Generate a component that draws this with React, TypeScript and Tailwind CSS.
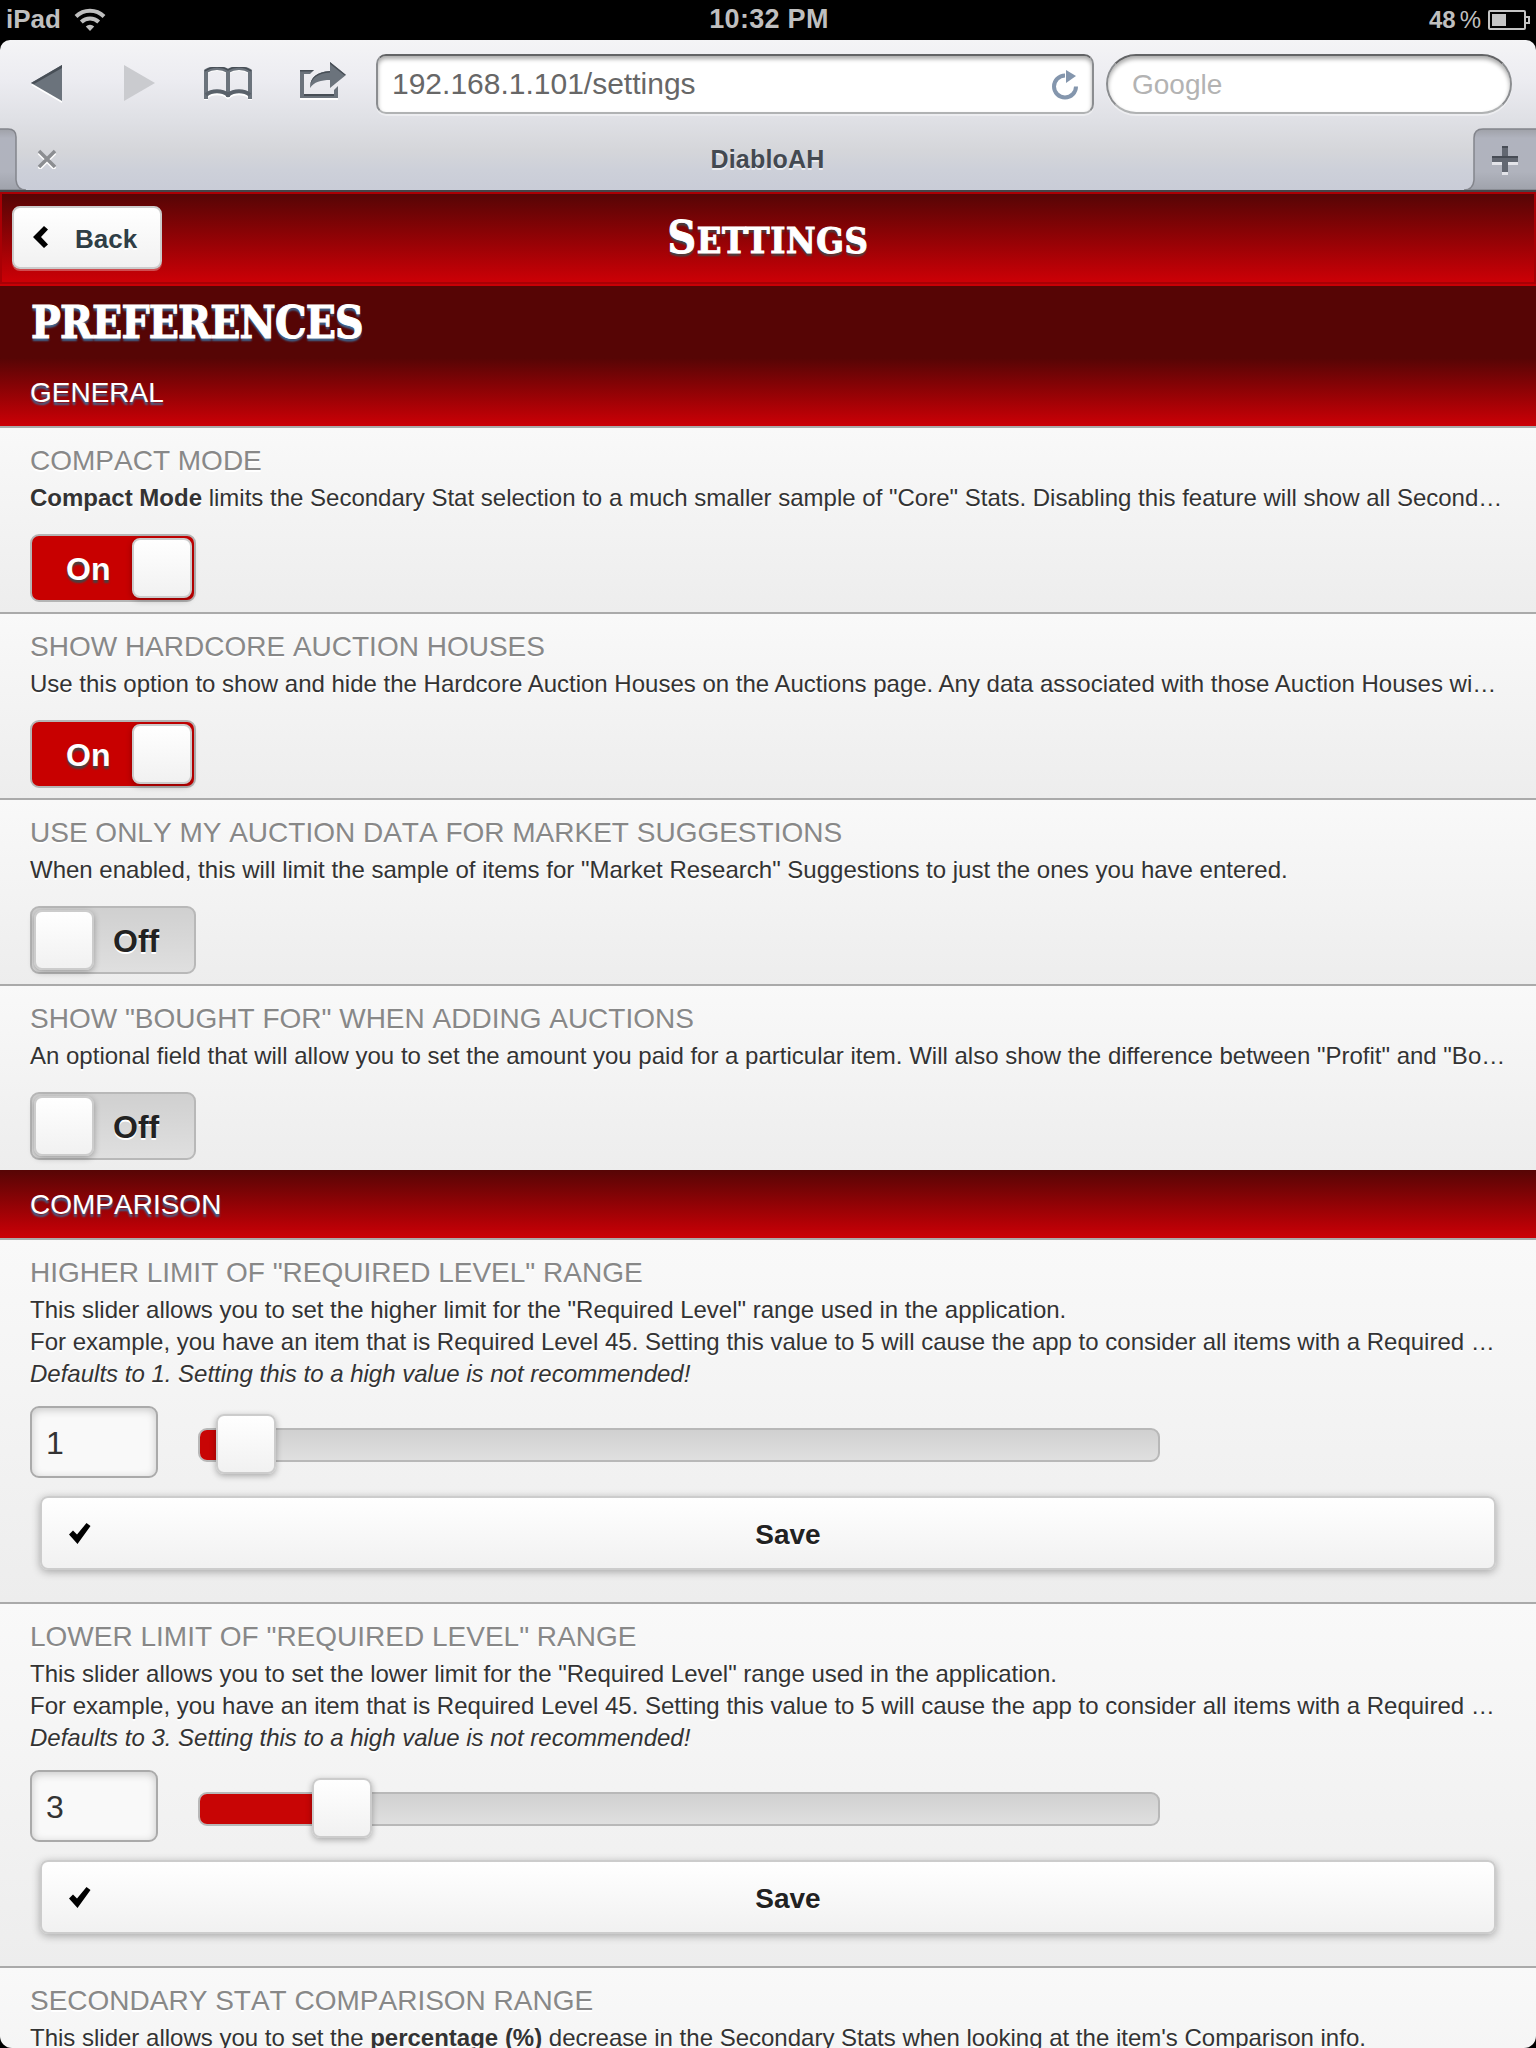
import type { ReactNode } from "react";

function StatusBar() {
  return (
    <div className="relative flex h-10 items-center justify-between bg-black pl-[6px] pr-[6px] text-[#bfbfbf]">
      <div className="flex items-center">
        <span className="relative -top-px w-[68px] text-[26px] font-bold leading-10">iPad</span>
        <svg width="32" height="24" viewBox="0 0 32 24" className="relative top-[-1px]">
          <g fill="none" stroke="#bfbfbf" strokeWidth="4">
            <path d="M2 9.5a20 20 0 0 1 28 0" />
            <path d="M7.3 15a12.5 12.5 0 0 1 17.4 0" />
          </g>
          <path d="M16 24l-4.2-4.6a6 6 0 0 1 8.4 0z" fill="#bfbfbf" />
        </svg>
      </div>
      <span className="absolute inset-x-0 -top-px pl-[2px] text-center text-[27px] font-bold leading-10 tracking-[0.3px] [font-kerning:none]">10:32 PM</span>
      <div className="flex items-center">
        <span className="text-[24px] font-bold leading-10">48</span>
        <span className="ml-[4px] mr-[7px] text-[24px] leading-10">%</span>
        <svg width="42" height="20" viewBox="0 0 42 20">
          <rect x="1" y="1" width="36" height="18" rx="1" fill="none" stroke="#c4c4c4" strokeWidth="2" />
          <path d="M38 7h3v6h-3" fill="none" stroke="#c4c4c4" strokeWidth="2" />
          <rect x="4" y="4" width="14" height="12" fill="#c4c4c4" />
        </svg>
      </div>
    </div>
  );
}

function BrowserBar() {
  return (
    <div className="h-[152px] bg-black">
      <div className="flex h-[152px] flex-col rounded-t-[10px] border-b-2 border-[#454549] bg-[linear-gradient(#f4f4f6_0px,#ececf1_40px,#dfe0e5_80px,#d5d6da_110px,#cdd0d9_130px,#c9ccd7_150px)]">
        <div className="flex h-[88px] items-center pl-[31px]">
          <svg width="31" height="38" viewBox="0 0 31 38">
            <path d="M0 20l31-18v36z" fill="#fff" />
            <path d="M0 18L31 0v36z" fill="#6b737c" />
            <path d="M0 18L31 0v3L3 19z" fill="#474e56" />
          </svg>
          <svg width="31" height="38" viewBox="0 0 31 38" className="ml-[62px]">
            <path d="M31 18L0 0v36z" fill="#cacbcf" />
          </svg>
          <svg width="48" height="34" viewBox="0 0 48 34" className="ml-[49px]">
            <g fill="none" strokeWidth="4">
              <path d="M2 33V5C8 1 18 1 24 5C30 1 40 1 46 5V33M24 6V31M2 30C8 25 18 25 24 30C30 25 40 25 46 30" stroke="#fff" />
              <path d="M2 32V4C8 0 18 0 24 4C30 0 40 0 46 4V32M24 4V30" stroke="#6b737c" />
              <path d="M2 28C8 23 18 23 24 28C30 23 40 23 46 28" stroke="#59616a" />
            </g>
            <path d="M1 4C8-1 18-1 24 3C30-1 40-1 47 4" fill="none" stroke="#474e56" strokeWidth="1.5" />
          </svg>
          <svg width="46" height="38" viewBox="0 0 46 38" className="relative -top-[3px] ml-12">
            <path d="M0 36h38v2H0z" fill="#fff" />
            <path d="M0 8h14l-4 4H4v20h30v-4l4-4v12H0z" fill="#6b737c" />
            <path d="M0 8h14l-2 1.5H0zM4 32h30v2H4z" fill="#474e56" />
            <path d="M30 0l16 13-16 13v-8c-9 0-16 2-20 8 0-11 7-16 20-17z" fill="#6b737c" />
            <path d="M30 0l16 13h-2L30 2zM10 24c1-9 7-14 20-15v1.500c-12 1-18 5-20 13.500z" fill="#474e56" />
          </svg>
          <div className="ml-[30px] flex h-[60px] w-[718px] items-center justify-between rounded-[10px] border-2 border-b-[#b0b2b3] border-t-[#636466] border-x-[#8b8d90] bg-white pl-[14px] pr-[13px] shadow-[inset_0_3px_4px_#00000055,0_2px_0_#ffffff66]">
            <span className="relative -top-px text-[30px] text-[#676767] [font-kerning:none]">192.168.1.101/settings</span>
            <svg width="28" height="32" viewBox="0 0 28 32" className="relative top-px">
              <path d="M14 6.500a11 11 0 1 0 11 11" fill="none" stroke="#8496ad" strokeWidth="4" />
              <path d="M15 1l10 6-10 7z" fill="#8496ad" />
            </svg>
          </div>
          <div className="ml-3 flex h-[60px] w-[406px] items-center rounded-full border-2 border-b-[#b0b2b3] border-t-[#636466] border-x-[#8b8d90] bg-white pl-6 shadow-[inset_0_3px_4px_#00000055,0_2px_0_#ffffff66]">
            <span className="relative top-px text-[28px] text-[#b3b3b3]">Google</span>
          </div>
        </div>
        <div className="flex h-[62px] items-center justify-between">
          <div className="flex items-center">
            <svg width="26" height="62" viewBox="0 0 26 62">
              <defs>
                <linearGradient id="tabSide" x1="0" y1="0" x2="0" y2="1">
                  <stop offset="0" stopColor="#9fa1a8" />
                  <stop offset=".15" stopColor="#b0b3be" />
                  <stop offset=".7" stopColor="#b0b3bd" />
                  <stop offset="1" stopColor="#9fa2ab" />
                </linearGradient>
              </defs>
              <path d="M-2 1H8q8 0 8 8V52q1 10 10 10H-2z" fill="url(#tabSide)" stroke="#83858c" strokeWidth="1.500" />
            </svg>
            <svg width="20" height="20" viewBox="0 0 20 20" className="ml-[11px]">
              <path d="M2 4l16 16M18 4L2 20" stroke="#fff" strokeWidth="3.500" />
              <path d="M2 2l16 16M18 2L2 18" stroke="#8b8d91" strokeWidth="3.500" />
            </svg>
          </div>
          <span className="relative left-[14px] top-px text-[25px] font-bold tracking-[0.2px] text-[#434951] [font-kerning:none] [text-shadow:0_2px_0_#ffffffaa]">DiabloAH</span>
          <svg width="86" height="62" viewBox="0 0 86 62">
            <path d="M88 1H33q-9 0-9 9V52q-1 10-10 10H88z" fill="url(#tabSide)" stroke="#83858c" strokeWidth="1.500" />
            <path d="M42 29h10v-10h6v10h10v8H58v10h-6v-10H42z" fill="#e3e4e9" />
            <path d="M42 28h10V18h6v10h10v6H58v10h-6V34H42z" fill="#626771" />
            <path d="M42 28h26v2H42zM52 18h6v2h-6z" fill="#474c55" />
          </svg>
        </div>
      </div>
    </div>
  );
}

function PageHeader() {
  return (
    <div className="h-[94px] border-b-2 border-[#c80006]">
      <div className="relative flex h-[92px] items-center border-2 border-[#a90005] bg-[linear-gradient(#560505,#cc0006)] pl-[10px]">
        <div className="relative -top-px flex h-[63px] w-[150px] items-center rounded-[8px] border-2 border-[#cccccc] bg-[linear-gradient(#fff,#f1f1f1)] pl-[19px] shadow-[0_2px_0_#ffffff4d]">
          <svg width="15" height="22" viewBox="0 0 15 22">
            <path d="M0 11L11 0l4 3.500L8 11l7 7.500L11 22z" fill="#000" />
          </svg>
          <span className="relative top-[2px] ml-[27px] text-[26px] font-bold text-[#2f3e46] [text-shadow:0_2px_0_#fff]">Back</span>
        </div>
        <h1 className="absolute inset-x-0 top-0 text-center font-['DejaVu_Serif_Condensed','DejaVu_Serif',serif] text-[44px] font-bold leading-[88px] tracking-[0.6px] text-white [-webkit-text-stroke:1px_#fff] [font-stretch:condensed] [text-shadow:0_3px_2px_#444]">
          S<span className="text-[36px]">ETTINGS</span>
        </h1>
      </div>
    </div>
  );
}

function SectionBar({ children }: { children: ReactNode }) {
  return (
    <h3 className="h-[68px] bg-[linear-gradient(#560505,#cc0006)] pl-[30px] text-[28px] leading-[70px] text-white [font-kerning:none] [text-shadow:0_3px_2px_#3e6790]">
      {children}
    </h3>
  );
}

function Row({ title, children }: { title: string; children: ReactNode }) {
  return (
    <section className="flow-root border-t-2 border-[#aaaaaa] bg-[linear-gradient(#f9f9f9,#ededed)] px-[30px] pt-[15px]">
      <h4 className="mb-[3px] whitespace-nowrap text-[28px] leading-9 text-[#888888] [font-kerning:none] [text-shadow:0_2px_0_#fff]">{title}</h4>
      {children}
    </section>
  );
}

function Line({ children }: { children: ReactNode }) {
  return <p className="whitespace-nowrap text-[24px] leading-8 text-[#333333] [text-shadow:0_2px_0_#fff]">{children}</p>;
}

function Toggle({ on }: { on: boolean }) {
  if (on) {
    return (
      <div className="mb-[10px] mt-5 flex h-[68px] w-[166px] items-center justify-between rounded-[9px] border-2 border-[#b5b5b5] bg-[#c80000] pl-[34px] pr-[2px]">
        <span className="relative top-px text-[32px] font-bold text-white [text-shadow:0_3px_2px_#444]">On</span>
        <div className="h-[60px] w-[60px] rounded-[8px] border-2 border-[#cccccc] bg-[linear-gradient(#fff,#f1f1f1)] shadow-[0_2px_6px_#0000004d]" />
      </div>
    );
  }
  return (
    <div className="mb-[10px] mt-5 flex h-[68px] w-[166px] items-center rounded-[9px] border-2 border-[#b8b8b8] bg-[linear-gradient(#d0d0d0,#dfdfdf)] pl-[2px]">
      <div className="h-[60px] w-[60px] rounded-[8px] border-2 border-[#cccccc] bg-[linear-gradient(#fff,#f1f1f1)] shadow-[0_2px_6px_#0000004d]" />
      <span className="relative top-px ml-[19px] text-[32px] font-bold text-[#222222] [text-shadow:0_2px_0_#fff]">Off</span>
    </div>
  );
}

function SliderControl({ value, fill }: { value: string; fill: number }) {
  return (
    <>
      <div className="mt-4 flex h-[72px] items-center">
        <div className="flex h-[72px] w-32 items-center rounded-[9px] border-2 border-[#aaaaaa] bg-[#f9f9f9] pl-[14px] text-[32px] text-[#333333] shadow-[inset_0_2px_8px_#00000033]">
          <span className="relative top-px">{value}</span>
        </div>
        <div className="relative top-[3px] ml-10 flex h-[34px] w-[962px] items-center rounded-[9px] border-2 border-[#b8b8b8] bg-[linear-gradient(#d0d0d0,#dfdfdf)]">
          <div className="h-[30px] shrink-0 rounded-l-[7px] bg-[#c80505]" style={{ width: fill }} />
          <div className="relative -top-px h-[60px] w-[60px] shrink-0 rounded-[8px] border-2 border-[#cccccc] bg-[linear-gradient(#fff,#f1f1f1)] shadow-[0_2px_6px_#0000004d]" />
        </div>
      </div>
      <div className="mx-[10px] mb-8 mt-[18px] flex h-[74px] items-center rounded-[8px] border-2 border-[#cccccc] bg-[linear-gradient(#fff,#f1f1f1)] pl-[26px] shadow-[0_2px_8px_#0000004d]">
        <svg width="24" height="24" viewBox="0 0 24 24" className="relative top-px">
          <path d="M1 12.500l4-4L9 12.500 18.500 1l4 3L9.500 22z" fill="#000" />
        </svg>
        <span className="relative top-[2px] flex-1 pr-[10px] text-center text-[28px] font-bold text-[#222222] [text-shadow:0_2px_0_#fff]">Save</span>
      </div>
    </>
  );
}

export default function App() {
  return (
    <div className="h-[2048px] w-[1536px] overflow-hidden bg-black font-['Liberation_Sans',Arial,sans-serif]">
      <div className="h-[2048px] overflow-hidden rounded-b-[12px]">
        <StatusBar />
        <BrowserBar />
        <PageHeader />
        <h2 className="h-[72px] whitespace-nowrap bg-[#560505] pl-[31px] font-['DejaVu_Serif_Condensed','DejaVu_Serif',serif] text-[44px] font-bold leading-[73px] tracking-[-0.8px] text-white [-webkit-text-stroke:1px_#fff] [font-stretch:condensed] [text-shadow:0_3px_2px_#3e6790]">
          PREFERENCES
        </h2>
        <SectionBar>GENERAL</SectionBar>
        <Row title="COMPACT MODE">
          <Line>
            <b>Compact Mode</b> limits the Secondary Stat selection to a much smaller sample of "Core" Stats. Disabling this feature will show all Second…
          </Line>
          <Toggle on />
        </Row>
        <Row title="SHOW HARDCORE AUCTION HOUSES">
          <Line>
            Use this option to show and hide the Hardcore Auction Houses on the Auctions page. Any data associated with those Auction Houses wi…
          </Line>
          <Toggle on />
        </Row>
        <Row title="USE ONLY MY AUCTION DATA FOR MARKET SUGGESTIONS">
          <Line>
            When enabled, this will limit the sample of items for "Market Research" Suggestions to just the ones you have entered.
          </Line>
          <Toggle on={false} />
        </Row>
        <Row title={'SHOW "BOUGHT FOR" WHEN ADDING AUCTIONS'}>
          <Line>
            An optional field that will allow you to set the amount you paid for a particular item. Will also show the difference between "Profit" and "Bo…
          </Line>
          <Toggle on={false} />
        </Row>
        <SectionBar>COMPARISON</SectionBar>
        <Row title={'HIGHER LIMIT OF "REQUIRED LEVEL" RANGE'}>
          <Line>This slider allows you to set the higher limit for the "Required Level" range used in the application.</Line>
          <Line>
            For example, you have an item that is Required Level 45. Setting this value to 5 will cause the app to consider all items with a Required …
          </Line>
          <Line>
            <i>Defaults to 1. Setting this to a high value is not recommended!</i>
          </Line>
          <SliderControl value="1" fill={16} />
        </Row>
        <Row title={'LOWER LIMIT OF "REQUIRED LEVEL" RANGE'}>
          <Line>This slider allows you to set the lower limit for the "Required Level" range used in the application.</Line>
          <Line>
            For example, you have an item that is Required Level 45. Setting this value to 5 will cause the app to consider all items with a Required …
          </Line>
          <Line>
            <i>Defaults to 3. Setting this to a high value is not recommended!</i>
          </Line>
          <SliderControl value="3" fill={112} />
        </Row>
        <Row title="SECONDARY STAT COMPARISON RANGE">
          <Line>
            This slider allows you to set the <b>percentage (%)</b> decrease in the Secondary Stats when looking at the item's Comparison info.
          </Line>
          <div className="h-[150px]" />
        </Row>
      </div>
    </div>
  );
}
